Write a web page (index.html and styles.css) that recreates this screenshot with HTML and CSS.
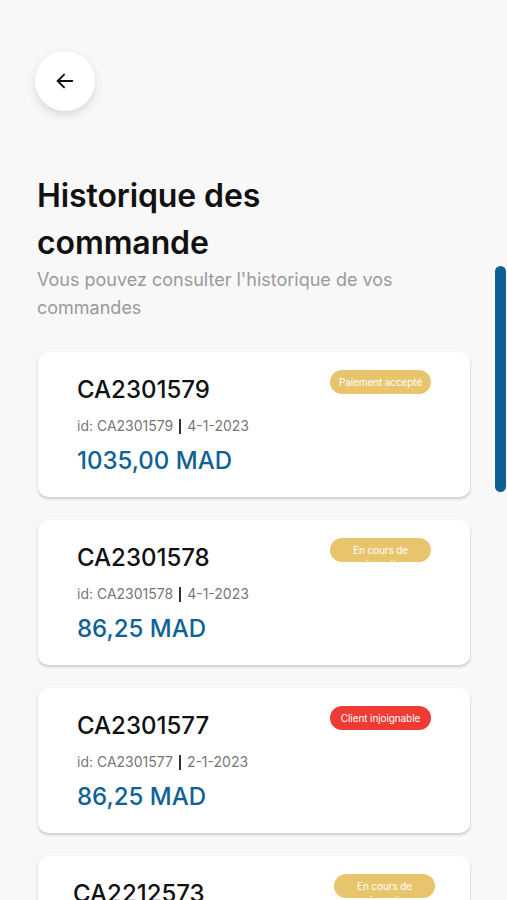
FILE: index.html
```html
<!DOCTYPE html>
<html lang="fr">
<head>
    <meta charset="UTF-8">
    <meta name="viewport" content="width=device-width, initial-scale=1.0">
    <title>Historique des commande</title>
    <link rel="stylesheet" href="styles.css">
</head>
<body>

    <div class="screen">
        <div class="topbar">
            <button class="back" aria-label="Retour">
                <svg width="22" height="22" viewBox="0 0 24 24" fill="none" stroke="#111" stroke-width="2" stroke-linecap="round" stroke-linejoin="round">
                    <path d="M20 12H4"/>
                    <path d="M11 5l-7 7 7 7"/>
                </svg>
            </button>
        </div>

        <h1 class="title">Historique des commande</h1>
        <p class="subtitle">Vous pouvez consulter l'historique de vos commandes</p>

        <div class="list">
            <div class="card">
                <div class="card-info">
                    <div class="ref">CA2301579</div>
                    <div class="meta">id: CA2301579 <span class="sep"></span> 4-1-2023</div>
                    <div class="price">1035,00 MAD</div>
                </div>
                <span class="badge yellow">Paiement accepté</span>
            </div>

            <div class="card">
                <div class="card-info">
                    <div class="ref">CA2301578</div>
                    <div class="meta">id: CA2301578 <span class="sep"></span> 4-1-2023</div>
                    <div class="price">86,25 MAD</div>
                </div>
                <span class="badge yellow">En cours de préparation</span>
            </div>

            <div class="card">
                <div class="card-info">
                    <div class="ref">CA2301577</div>
                    <div class="meta">id: CA2301577 <span class="sep"></span> 2-1-2023</div>
                    <div class="price">86,25 MAD</div>
                </div>
                <span class="badge red">Client injoignable</span>
            </div>

            <div class="card last">
                <div class="card-info">
                    <div class="ref">CA2212573</div>
                    <div class="meta">id: CA2212573 <span class="sep"></span> 28-12-2022</div>
                    <div class="price">86,25 MAD</div>
                </div>
                <span class="badge yellow">En cours de préparation</span>
            </div>
        </div>

        <div class="scrollbar"></div>
    </div>

</body>
</html>
```

FILE: styles.css
```css
body {
    margin: 0;
    background: #f8f8f8;
    font-family: Inter, "Noto Sans", sans-serif;
    color: #111;
}
.screen {
    position: relative;
    height: 900px;
    overflow: hidden;
    padding: 0 37px;
}
.topbar {
    padding-top: 51px;
}
.back {
    width: 60px;
    height: 60px;
    border-radius: 50%;
    border: none;
    background: #fff;
    box-shadow: 0 4px 10px rgba(0, 0, 0, 0.13);
    display: flex;
    align-items: center;
    justify-content: center;
    padding: 0;
    margin-left: -2px;
}
.title {
    margin: 61px 0 0;
    font-size: 32px;
    font-weight: 600;
    line-height: 47px;
    letter-spacing: -0.1px;
    width: 270px;
}
.subtitle {
    margin: 0;
    font-size: 18px;
    line-height: 28px;
    color: #9a9a9a;
    width: 400px;
}
.list {
    margin-top: 30px;
    display: flex;
    flex-direction: column;
    gap: 23px;
}
.card {
    margin-left: 1px;
    width: 432px;
    height: 145px;
    box-sizing: border-box;
    background: #fff;
    border-radius: 10px;
    box-shadow: 0 2px 3px rgba(0, 0, 0, 0.18), 0 0 2px rgba(0, 0, 0, 0.06);
    padding: 18px 39px 0 39px;
    display: flex;
    justify-content: space-between;
    align-items: flex-start;
}
.card.last {
    padding-left: 35px;
    padding-right: 35px;
}
.ref {
    font-size: 24px;
    font-weight: 500;
    line-height: 40px;
}
.meta {
    font-size: 14px;
    color: #777;
    line-height: 32px;
    display: flex;
    align-items: center;
    gap: 6px;
}
.sep {
    display: inline-block;
    width: 2px;
    height: 15px;
    background: #333;
}
.price {
    font-size: 24px;
    font-weight: 500;
    color: #0f6196;
    line-height: 38px;
}
.badge {
    width: 101px;
    height: 24px;
    box-sizing: border-box;
    border-radius: 12px;
    overflow: hidden;
    color: #fff;
    font-size: 10px;
    line-height: 14px;
    text-align: center;
    padding: 5px 5px 0;
    letter-spacing: -0.1px;
}
.badge.yellow {
    background: #e8c56c;
}
.badge.red {
    background: #ee3b34;
}
.scrollbar {
    position: absolute;
    right: 1px;
    top: 266px;
    width: 11px;
    height: 226px;
    border-radius: 6px;
    background: #0d5f96;
}
```
